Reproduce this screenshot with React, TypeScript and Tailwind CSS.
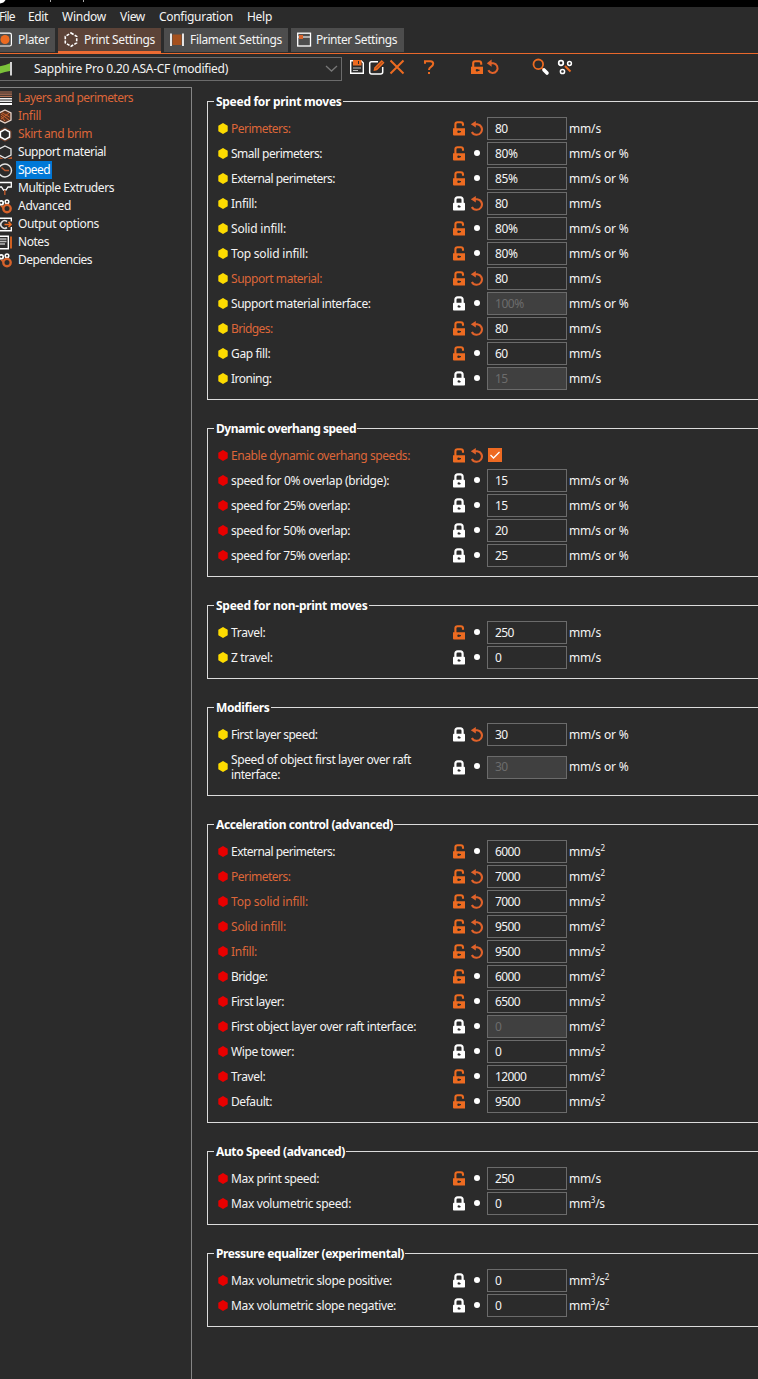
import React, { useLayoutEffect, useRef, useState } from "react";

/** Single line of text tracked so that it occupies exactly `w` pixels. */
function Fit({ w, children, className = "" }: { w: number; children: string; className?: string }) {
  const ref = useRef<HTMLSpanElement>(null);
  const [spacing, setSpacing] = useState(0);
  useLayoutEffect(() => {
    if (!ref.current) return;
    const natural = ref.current.getBoundingClientRect().width - spacing * children.length;
    setSpacing((w - natural) / children.length);
  }, [w, children]);
  return (
    <span ref={ref} className={`inline-block whitespace-pre ${className}`} style={{ letterSpacing: `${spacing}px` }}>
      {children}
    </span>
  );
}

function Lock({ open }: { open?: boolean }) {
  return open ? (
    <svg width="12" height="15" viewBox="0 0 12 15" className="shrink-0">
      <path d="M2.4 8V3.4Q2.4 1.3 4.5 1.3H7.8Q10 1.3 10 3.6V4.8" fill="none" stroke="#ed6b21" strokeWidth="2.1" />
      <path d="M0 7.2H12V14.4H1Q0 14.4 0 13.4Z" fill="#ed6b21" />
      <circle cx="5.6" cy="10.7" r="1.3" fill="#2b2b2b" />
      <path d="M6 10.1H8V11.3H6Z" fill="#2b2b2b" />
    </svg>
  ) : (
    <svg width="12" height="15" viewBox="0 0 12 15" className="shrink-0">
      <path d="M2.4 8V3.8Q2.4 1.3 4.7 1.3H7.3Q9.6 1.3 9.6 3.8V8" fill="none" stroke="#fff" strokeWidth="2.2" />
      <rect y="6.8" width="12" height="7.7" rx="0.8" fill="#fff" />
      <circle cx="5.8" cy="10.4" r="1.2" fill="#2b2b2b" />
      <path d="M6 10H7.6V11.2H6Z" fill="#2b2b2b" />
    </svg>
  );
}

function Undo() {
  return (
    <svg width="14" height="15" viewBox="0 0 14 15" className="-ml-[2px] mb-px shrink-0">
      <path d="M3.6 3.2H7.2A5.3 5.3 0 1 1 1.9 10.9" fill="none" stroke="#e0622a" strokeWidth="2.1" />
      <path d="M0.8 3.3L5.8 0V6.6Z" fill="#e0622a" />
    </svg>
  );
}

type RowData = {
  label: string;
  w: number;
  value?: string;
  unit: string;
  open?: boolean;
  undo?: boolean;
  hot?: boolean;
  off?: boolean;
  check?: boolean;
  second?: string;
  secondW?: number;
};

const unitWidths: Record<string, number> = { "mm/s": 32, "mm/s or %": 59.5 };

function Unit({ unit }: { unit: string }) {
  if (unitWidths[unit]) return <Fit w={unitWidths[unit]}>{unit}</Fit>;
  return (
    <span className="flex whitespace-pre tracking-[-0.3px]">
      {unit.split(/([²³])/).map((part, i) =>
        part === "²" || part === "³" ? (
          <span key={i} className="relative -top-[4px] text-[8px]">
            {part === "²" ? "2" : "3"}
          </span>
        ) : (
          <span key={i}>{part}</span>
        )
      )}
    </span>
  );
}

function Row({ r, dot }: { r: RowData; dot: string }) {
  return (
    <div className={`flex items-center ${r.second ? "h-10" : "h-[25px]"}`}>
      <svg width="10" height="11" viewBox="0 0 10 11" className="mb-px ml-[10px] shrink-0">
        <path d="M5 0L9.7 2.7V8.3L5 11L0.3 8.3V2.7Z" fill={dot} />
      </svg>
      <div className={`ml-[3px] w-[222px] leading-[15px] ${r.hot ? "text-[#dd6639]" : "text-[#f4f4f4]"}`}>
        <Fit w={r.w}>{r.label}</Fit>
        {r.second && (
          <>
            <br />
            <Fit w={r.secondW ?? 50}>{r.second}</Fit>
          </>
        )}
      </div>
      <div className="flex w-[17px]">
        <Lock open={r.open} />
      </div>
      <div className="flex w-4 justify-center">
        {r.undo ? <Undo /> : <span className="mb-[2px] mr-[2px] size-[6px] rounded-full bg-white" />}
      </div>
      {r.check ? (
        <span className="mb-px ml-[2px] flex size-[14px] items-center justify-center bg-[#ee6a22]">
          <svg width="12" height="10" viewBox="0 0 12 10">
            <path d="M1.5 5L4.5 8L10.5 2" fill="none" stroke="#fff" strokeWidth="1.3" />
          </svg>
        </span>
      ) : (
        <>
          <div
            className={`ml-px flex h-[23px] w-20 items-center border border-[#6b6b6b] pl-[7px] ${
              r.off ? "bg-[#404040] text-[#6c6c6c]" : "text-[#f4f4f4]"
            }`}
          >
            <Fit w={valueWidth(r.value ?? "")}>{r.value ?? ""}</Fit>
          </div>
          <div className="ml-[2px] text-[#f4f4f4]">
            <Unit unit={r.unit} />
          </div>
        </>
      )}
    </div>
  );
}

function valueWidth(v: string) {
  return v.split("").reduce((n, c) => n + (c === "%" ? 10 : 6.25), 0);
}

const SP = "mm/s";
const PC = "mm/s or %";
const AC = "mm/s²";

const sections: { title: string; w: number; dot: string; rows: RowData[] }[] = [
  {
    title: "Speed for print moves",
    w: 125.5,
    dot: "#fddb00",
    rows: [
      { label: "Perimeters:", w: 59.5, value: "80", unit: SP, open: true, undo: true, hot: true },
      { label: "Small perimeters:", w: 91, value: "80%", unit: PC, open: true },
      { label: "External perimeters:", w: 104, value: "85%", unit: PC, open: true },
      { label: "Infill:", w: 26, value: "80", unit: SP, undo: true },
      { label: "Solid infill:", w: 55, value: "80%", unit: PC, open: true },
      { label: "Top solid infill:", w: 77, value: "80%", unit: PC, open: true },
      { label: "Support material:", w: 91, value: "80", unit: SP, open: true, undo: true, hot: true },
      { label: "Support material interface:", w: 139.5, value: "100%", unit: PC, off: true },
      { label: "Bridges:", w: 41.5, value: "80", unit: SP, open: true, undo: true, hot: true },
      { label: "Gap fill:", w: 39.5, value: "60", unit: SP, open: true },
      { label: "Ironing:", w: 40.5, value: "15", unit: SP, off: true },
    ],
  },
  {
    title: "Dynamic overhang speed",
    w: 140,
    dot: "#e80000",
    rows: [
      { label: "Enable dynamic overhang speeds:", w: 179, unit: "", open: true, undo: true, hot: true, check: true },
      { label: "speed for 0% overlap (bridge):", w: 158, value: "15", unit: PC },
      { label: "speed for 25% overlap:", w: 119, value: "15", unit: PC },
      { label: "speed for 50% overlap:", w: 119, value: "20", unit: PC },
      { label: "speed for 75% overlap:", w: 119, value: "25", unit: PC },
    ],
  },
  {
    title: "Speed for non-print moves",
    w: 151.5,
    dot: "#fddb00",
    rows: [
      { label: "Travel:", w: 34.5, value: "250", unit: SP, open: true },
      { label: "Z travel:", w: 41.5, value: "0", unit: SP },
    ],
  },
  {
    title: "Modifiers",
    w: 53.5,
    dot: "#fddb00",
    rows: [
      { label: "First layer speed:", w: 86.5, value: "30", unit: PC, undo: true },
      {
        label: "Speed of object first layer over raft",
        w: 180,
        second: "interface:",
        secondW: 49,
        value: "30",
        unit: PC,
        off: true,
      },
    ],
  },
  {
    title: "Acceleration control (advanced)",
    w: 177,
    dot: "#e80000",
    rows: [
      { label: "External perimeters:", w: 104, value: "6000", unit: AC, open: true },
      { label: "Perimeters:", w: 59.5, value: "7000", unit: AC, open: true, undo: true, hot: true },
      { label: "Top solid infill:", w: 77, value: "7000", unit: AC, open: true, undo: true, hot: true },
      { label: "Solid infill:", w: 55, value: "9500", unit: AC, open: true, undo: true, hot: true },
      { label: "Infill:", w: 26, value: "9500", unit: AC, open: true, undo: true, hot: true },
      { label: "Bridge:", w: 36.5, value: "6000", unit: AC, open: true },
      { label: "First layer:", w: 53, value: "6500", unit: AC, open: true },
      { label: "First object layer over raft interface:", w: 185, value: "0", unit: AC, off: true },
      { label: "Wipe tower:", w: 63, value: "0", unit: AC },
      { label: "Travel:", w: 34.5, value: "12000", unit: AC, open: true },
      { label: "Default:", w: 41, value: "9500", unit: AC, open: true },
    ],
  },
  {
    title: "Auto Speed (advanced)",
    w: 129,
    dot: "#e80000",
    rows: [
      { label: "Max print speed:", w: 88, value: "250", unit: SP, open: true },
      { label: "Max volumetric speed:", w: 120, value: "0", unit: "mm³/s" },
    ],
  },
  {
    title: "Pressure equalizer (experimental)",
    w: 188,
    dot: "#e80000",
    rows: [
      { label: "Max volumetric slope positive:", w: 161, value: "0", unit: "mm³/s²" },
      { label: "Max volumetric slope negative:", w: 165, value: "0", unit: "mm³/s²" },
    ],
  },
];

const O = "#ed6b21";

function gear(color2: string) {
  return (
    <>
      <circle cx="1.2" cy="3.8" r="2" fill="none" stroke="#fff" strokeWidth="1.7" />
      <circle cx="7" cy="2.8" r="1.8" fill="none" stroke="#fff" strokeWidth="1.5" />
      <path d="M1 7L3.5 8.5" stroke={color2} strokeWidth="1.5" />
      <circle cx="7" cy="9.6" r="3.7" fill="none" stroke={color2} strokeWidth="2.4" />
    </>
  );
}

const nav: { label: string; w: number; hot?: boolean; active?: boolean; icon: React.ReactNode }[] = [
  {
    label: "Layers and perimeters",
    w: 115,
    hot: true,
    icon: (
      <>
        <path d="M0 1H12M0 3.2H12M0 5.4H12" stroke="#b57355" strokeWidth="1.2" />
        <path d="M0 7.8H12M0 10.3H12" stroke="#eee" strokeWidth="1.4" />
        <path d="M0 13H12" stroke="#fff" strokeWidth="2" />
      </>
    ),
  },
  {
    label: "Infill",
    w: 23,
    hot: true,
    icon: (
      <>
        <path d="M5 1L11 4V11L5 14L-1 11V4Z" fill="#5c321f" stroke="#e8d6cc" strokeWidth="1.3" />
        <path d="M1 5L9 11M1 10L9 4M2 3.8L9.5 8M5 12L1 7" stroke="#c9632f" strokeWidth="1" />
      </>
    ),
  },
  {
    label: "Skirt and brim",
    w: 74,
    hot: true,
    icon: (
      <>
        <path d="M5 0.8L11 4V11L5 14.2L-1 11V4Z" fill="none" stroke="#7a3f25" strokeWidth="1" />
        <path d="M5 2.3L9.6 5V10L5 12.7L0.4 10V5Z" fill="none" stroke="#fff" strokeWidth="1.5" />
      </>
    ),
  },
  {
    label: "Support material",
    w: 88,
    icon: (
      <>
        <path d="M5 1L11 4V10L5 13L-1 10V4Z" fill="none" stroke="#e6e6e6" strokeWidth="1.3" />
        <path d="M0 14V12L3.5 14ZM7.5 14L12 11.5V14Z" fill="#b4562b" />
      </>
    ),
  },
  {
    label: "Speed",
    w: 32,
    active: true,
    icon: (
      <>
        <circle cx="5" cy="7.5" r="6.5" fill="none" stroke="#e2e2e2" strokeWidth="1.4" />
        <path d="M1.5 4.5L5 7.5H9" stroke="#b75a32" strokeWidth="1.6" fill="none" />
      </>
    ),
  },
  {
    label: "Multiple Extruders",
    w: 96,
    icon: (
      <>
        <path d="M0 1.5H11.3V6H8L6 9H3.5L1.5 6H0" fill="none" stroke="#fff" strokeWidth="1.3" />
        <path d="M4.8 9V14" stroke="#b4562b" strokeWidth="1.5" />
      </>
    ),
  },
  { label: "Advanced", w: 53, icon: gear("#d6622b") },
  {
    label: "Output options",
    w: 81,
    icon: (
      <>
        <path d="M0 1.2H11.3V4.5M11.3 10V13.8H0" fill="none" stroke="#fff" strokeWidth="1.4" />
        <path d="M7 4.5A3.8 3.8 0 1 0 7 10.5" fill="none" stroke="#ddd" strokeWidth="1.6" />
        <path d="M4.5 7.5H11M8.5 4.8L11 7.5L8.5 10" fill="none" stroke={O} strokeWidth="1.6" />
      </>
    ),
  },
  {
    label: "Notes",
    w: 31,
    icon: (
      <>
        <path d="M0 1.2H8.3V13.8H0" fill="none" stroke="#fff" strokeWidth="1.4" />
        <path d="M0 4H6.5M0 6.5H6.5M0 9H5" stroke="#bbb" strokeWidth="1.5" />
        <path d="M11 1.5V13.5" stroke={O} strokeWidth="1.7" />
      </>
    ),
  },
  { label: "Dependencies", w: 74, icon: gear("#d6622b") },
];

function Tab({ cls, label, w, icon }: { cls: string; label: string; w: number; icon: React.ReactNode }) {
  return (
    <div className={`flex h-6 items-center ${cls}`}>
      {icon}
      <Fit w={w}>{label}</Fit>
    </div>
  );
}

export default function App() {
  return (
    <div className="h-[1379px] w-[758px] overflow-hidden bg-[#2b2b2b] font-['Noto_Sans','Open_Sans',sans-serif] text-[12px] leading-4 text-[#f4f4f4]">
      <div className="flex h-[7px] items-start bg-black">
        <svg width="100" height="7" viewBox="0 0 100 7">
          <path d="M0 0H5.5Q4 3 0 3.5Z" fill="#fff" />
          <path d="M50.5 0V2M83.5 0V2" stroke="#aaa" />
        </svg>
      </div>
      <div className="flex h-[21px] items-start pt-[2px]">
        <div className="-ml-px w-[29px] shrink-0"><Fit w={15.5}>File</Fit></div>
        <div className="w-[34px]"><Fit w={20}>Edit</Fit></div>
        <div className="w-[58px]"><Fit w={44}>Window</Fit></div>
        <div className="w-[39px]"><Fit w={25}>View</Fit></div>
        <div className="w-[88px]"><Fit w={74}>Configuration</Fit></div>
        <Fit w={25}>Help</Fit>
      </div>
      <div className="flex h-[26px] border-b border-[#e9682c]">
        <Tab
          cls="w-[55px] bg-[#4d4d4d]"
          label="Plater"
          w={31}
          icon={
            <svg width="18" height="16" viewBox="0 0 18 16">
              <rect x="-3" y="1.2" width="14.4" height="12.8" rx="1.8" fill="none" stroke="#fff" strokeWidth="1.2" />
              <circle cx="5" cy="7.5" r="4.5" fill="#ed6b21" />
            </svg>
          }
        />
        <div className="ml-[3px] h-[26px] w-[103px] border-b-[3px] border-[#ed6c33] bg-[#5c4338]">
          <Tab
            cls="pl-[6px]"
            label="Print Settings"
            w={71}
            icon={
              <svg width="20" height="16" viewBox="0 0 20 16">
                <path d="M7 1L12.7 4.4V10.9L7 14.3L1.3 10.9V4.4Z" fill="none" stroke="#fff" strokeWidth="1.6" strokeDasharray="3 1.3" />
              </svg>
            }
          />
        </div>
        <Tab
          cls="ml-[3px] w-[124px] bg-[#4d4d4d] pl-[6px]"
          label="Filament Settings"
          w={92}
          icon={
            <svg width="20" height="16" viewBox="0 0 20 16">
              <path d="M1 1.5V14M13 1.5V14" stroke="#fff" strokeWidth="1.7" />
              <rect x="2.5" y="2.5" width="9" height="10.5" fill="#a4501e" />
            </svg>
          }
        />
        <Tab
          cls="ml-[3px] w-[113px] bg-[#4d4d4d] pl-[6px]"
          label="Printer Settings"
          w={81}
          icon={
            <svg width="19" height="16" viewBox="0 0 19 16">
              <rect x="0.7" y="1.2" width="12.8" height="12.8" fill="none" stroke="#fff" strokeWidth="1.3" />
              <path d="M0 5H14" stroke="#fff" strokeWidth="1.1" />
              <rect x="2" y="3" width="4" height="4" fill="#d7632c" />
            </svg>
          }
        />
      </div>
      <div className="flex h-[33px] items-start pt-[3px]">
        <div className="flex h-6 w-[342px] items-center border border-l-0 border-[#6b6b6b]">
          <svg width="34" height="16" viewBox="0 0 34 16">
            <path d="M0 5.2Q4 4.8 10 2.2V10Q5 10.5 0 12.5Z" fill="#7bc23a" />
            <path d="M11 1V14.5" stroke="#fff" strokeWidth="1.6" />
          </svg>
          <Fit w={194}>Sapphire Pro 0.20 ASA-CF (modified)</Fit>
          <svg width="13" height="8" viewBox="0 0 13 8" className="ml-auto mr-[3px]">
            <path d="M1 1L6.5 6L12 1" fill="none" stroke="#777" strokeWidth="1.3" />
          </svg>
        </div>
        <svg width="240" height="22" viewBox="342 57 240 22">
          <path d="M350.7 60.7H361L363.3 63V73.3H350.7Z" fill="none" stroke="#fff" strokeWidth="1.4" />
          <path d="M353 60H361.5V65.5H353Z" fill={O} />
          <path d="M358.5 61V64" stroke="#2b2b2b" />
          <path d="M353 68H361M353 70.5H358" stroke="#bbb" strokeWidth="1.2" />
          <path d="M378 61.7H371.5Q369.7 61.7 369.7 63.5V72Q369.7 74 371.7 74H380.5Q382.7 74 382.7 72V67" fill="none" stroke="#fff" strokeWidth="1.5" />
          <path d="M373.5 71L374.3 67.5L381.7 60L384.5 62.7L377 70.2Z" fill={O} />
          <path d="M376 68.5L382.5 62" stroke="#7a3512" strokeWidth="0.8" />
          <path d="M390.5 60.5L403.5 73.5M403.5 60.5L390.5 73.5" stroke={O} strokeWidth="2" />
          <path d="M425 63.8V61.2H430.5Q433.2 61.2 433.2 63.8Q433.2 65.5 431 66.8Q429 68 429 70" fill="none" stroke={O} strokeWidth="2" />
          <path d="M428 72H430V74H428Z" fill={O} />
          <path d="M473.2 67V63.3Q473.2 61.2 475.2 61.2H479Q481.2 61.2 481.2 63.5V64.8" fill="none" stroke={O} strokeWidth="2.1" />
          <path d="M471 66.7H483V74H471Z" fill={O} />
          <path d="M475.8 70.2H479.5M477 69V71.5" stroke="#2b2b2b" strokeWidth="1.5" />
          <path d="M489.5 63.2H493.3A4.9 4.9 0 1 1 488.3 70.3" fill="none" stroke="#e0622a" strokeWidth="2" />
          <path d="M486.8 63.2L491.6 59.6V66.8Z" fill="#e0622a" />
          <circle cx="538.3" cy="64.3" r="4.8" fill="none" stroke={O} strokeWidth="1.8" />
          <path d="M541.8 68L543.5 69.7" stroke={O} strokeWidth="1.6" />
          <path d="M544 70L547 73" stroke="#fff" strokeWidth="3.6" strokeLinecap="round" />
          <circle cx="561" cy="63" r="2.3" fill="none" stroke="#fff" strokeWidth="1.7" />
          <circle cx="569.5" cy="63.5" r="1.9" fill="none" stroke="#fff" strokeWidth="1.5" />
          <circle cx="562.5" cy="71.5" r="2.1" fill="none" stroke="#fff" strokeWidth="1.5" />
          <path d="M565 66L570.5 71.5" stroke={O} strokeWidth="2" />
        </svg>
      </div>
      <div className="flex h-[1292px]">
        <div className="h-full w-48 shrink-0 border-r border-t border-[#858585] pt-px">
          {nav.map((n) => (
            <div key={n.label} className="flex h-[18px] items-center">
              <svg width="16" height="15" viewBox="0 0 16 15" className="shrink-0">
                {n.icon}
              </svg>
              <div
                className={`flex h-[18px] items-center px-[2px] ${
                  n.active ? "bg-[#0078d7] text-white" : n.hot ? "text-[#dd6639]" : ""
                }`}
              >
                <Fit w={n.w}>{n.label}</Fit>
              </div>
            </div>
          ))}
        </div>
        <div className="ml-[15px] flex flex-1 flex-col gap-7 pt-[14px]">
          {sections.map((s) => (
            <div key={s.title} className="relative border border-r-0 border-[#dcdcdc] pb-2 pt-[14px]">
              <div className="absolute -top-[8px] left-[6px] bg-[#2b2b2b] pl-[2px] pr-px font-bold text-white">
                <Fit w={s.w}>{s.title}</Fit>
              </div>
              {s.rows.map((r) => (
                <Row key={r.label} r={r} dot={s.dot} />
              ))}
            </div>
          ))}
        </div>
      </div>
    </div>
  );
}
